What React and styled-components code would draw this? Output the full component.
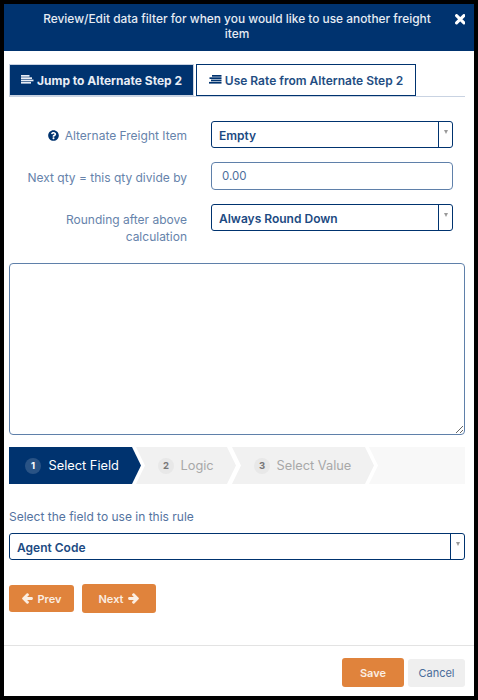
import React from 'react';
import styled, { createGlobalStyle } from 'styled-components';
import { FaArrowLeft, FaArrowRight, FaQuestionCircle } from 'react-icons/fa';

const Global = createGlobalStyle`
  html, body { margin: 0; padding: 0; background: #000; }
  body { font-family: Inter, "Liberation Sans", sans-serif; }
  * { box-sizing: border-box; }
`;
const navy = '#00336f';
const Frame = styled.div`
  width: 478px; height: 700px; padding: 4px; background: #000;
`;
const Modal = styled.div`
  width: 470px; height: 692px; background: #fff; display: flex; flex-direction: column;
`;
const Header = styled.div`
  background: ${navy}; height: 47px; flex: none; display: flex; align-items: flex-start;
  color: #e6ecf4; font-size: 11.9px; font-weight: 500; line-height: 15px;
`;
const HeaderTitle = styled.div`
  flex: 1; text-align: center; margin-left: 30px; padding-top: 7px;
`;
const Close = styled.span`
  width: 34px; flex: none; display: flex; justify-content: center; padding: 10px 0 0 6px; color: #fff;
`;
const Body = styled.div`
  flex: 1; padding: 13px 9px 0 5px; display: flex; flex-direction: column;
`;
const Tabs = styled.div`
  display: flex; border-bottom: 1px solid #c9d3e2; height: 33px; flex: none; width: 456px;
`;
const Tab = styled.div`
  height: 32px;
  width: ${p => (p.$active ? '185px' : '220px')};
  margin-left: ${p => (p.$active ? '0' : '2px')};
  border: 1px solid ${p => (p.$active ? '#c9d3e2' : navy)};
  background: ${p => (p.$active ? navy : '#fff')};
  color: ${p => (p.$active ? '#e8edf5' : '#234d82')};
  font-size: 12px; font-weight: ${p => (p.$active ? 700 : 600)};
  display: flex; align-items: center; justify-content: center; gap: 3px;
`;
const Form = styled.div`
  padding-top: 24px; display: flex; flex-direction: column; flex: none;
`;
const Row = styled.div`
  display: grid; grid-template-columns: 178px 242px; column-gap: 24px;
  margin-bottom: ${p => p.$mb}px; align-items: start;
`;
const Label = styled.div`
  text-align: right; color: #6683ab; font-size: 12px; line-height: 17px; padding-top: ${p => p.$pt || 0}px;
  display: flex; justify-content: flex-end; align-items: center; gap: 6px;
`;
const LabelStack = styled.div`
  text-align: right; color: #6683ab; font-size: 12px; line-height: 17px; padding-top: 7px;
`;
const HelpIcon = styled(FaQuestionCircle)`
  width: 11px; height: 11px; color: ${navy};
`;
const SelectBox = styled.div`
  height: 27px; border: 1px solid ${navy}; border-radius: 3px; display: flex; align-items: center;
  background: #fff; color: #1c4a82; font-size: 12px; font-weight: 600; width: ${p => p.$w || 242}px;
`;
const SelectText = styled.span`
  flex: 1; padding: 1px 0 0 7px;
`;
const SelectCaret = styled.span`
  width: 14px; height: 100%; border-left: 1px solid ${navy}; display: flex; justify-content: center; padding-top: 8px;
`;
const Caret = styled.i`
  width: 0; height: 0; border-left: 2.5px solid transparent; border-right: 2.5px solid transparent; border-top: 4px solid #999;
`;
const Input = styled.div`
  height: 28px; border: 1px solid #5f80aa; border-radius: 4px; display: flex; align-items: center;
  padding: 0 0 0 10px; color: #4e6f9c; font-size: 11.5px;
`;
const TextArea = styled.div`
  height: 172px; width: 456px; border: 1px solid #5f80aa; border-radius: 4px; flex: none; position: relative; margin-top: 18px;
`;
const Grip = styled.svg`
  position: absolute; right: 0; bottom: 0;
`;
const Steps = styled.div`
  margin-top: 12px; height: 37px; width: 456px; background: #fff; display: flex; flex: none; overflow: hidden;
`;
const Step = styled.div`
  height: 37px; width: ${p => p.$w}px; margin-left: ${p => p.$ml}px; flex: none;
  background: ${p => (p.$active ? navy : '#f1f1f1')};
  clip-path: polygon(0 0, calc(100% - 9px) 0, 100% 50%, calc(100% - 9px) 100%, 0 100%, ${p => (p.$first ? '0 50%' : '9px 50%')});
  color: ${p => (p.$active ? '#fff' : '#a8a8a8')}; font-size: 12.8px;
  display: flex; align-items: center; padding-left: ${p => p.$pl}px; gap: ${p => (p.$active ? 7.5 : 6.5)}px;
`;
const StepRest = styled.div`
  height: 37px; flex: 1; margin-left: -5px; background: #f8f8f8;
  clip-path: polygon(0 0, 100% 0, 100% 100%, 0 100%, 9px 50%);
`;
const Num = styled.span`
  width: 16px; height: 16px; border-radius: 50%; flex: none; display: flex; align-items: center; justify-content: center;
  background: ${p => (p.$active ? '#295385' : '#e8e8e8')}; color: ${p => (p.$active ? '#fff' : '#777')};
  font-size: 9.5px; font-weight: 700;
`;
const FieldLabel = styled.div`
  margin-top: 25px; color: #5473a0; font-size: 12px; line-height: 16px; height: 16px;
`;
const FieldSelect = styled(SelectBox)`
  margin-top: 8px;
`;
const Buttons = styled.div`
  display: flex; align-items: center; gap: 8px; margin-top: 24px; flex: none;
`;
const OrangeBtn = styled.div`
  background: #e0833c; color: #fbeee3; border-radius: 3px; font-size: 11px; font-weight: 600;
  display: flex; align-items: center; justify-content: center; gap: 5px;
  width: ${p => p.$w}px; height: ${p => p.$h}px;
  svg { width: 11px; height: 11px; stroke: currentColor; stroke-width: 50; }
`;
const Footer = styled.div`
  height: 51px; flex: none; border-top: 1px solid #e3e3e3; display: flex; justify-content: flex-end;
  align-items: flex-start; padding: 12px 9px 0 0; gap: 4px;
`;
const CancelBtn = styled.div`
  background: #efefef; color: #4a6c9a; border-radius: 3px; font-size: 11px; width: 57px; height: 28px; margin-top: 1px;
  display: flex; align-items: center; justify-content: center;
`;

const Lines = ({ right, color }) => (
  <svg width="13" height="10" viewBox="0 0 13 10" fill={color}>
    {[0, 2.3, 4.6, 6.9].map((y, i) => {
      const w = right ? [9.5, 12, 10.5, 12.5][i] : [8.5, 11, 12.5, 10][i];
      return <rect key={i} x={right ? 12.5 - w : 0} y={y} width={w} height="1.7" />;
    })}
  </svg>
);
const X = () => (
  <svg width="10.5" height="10.5" viewBox="0 0 10 10">
    <path d="M1.5 1.5l7 7M8.5 1.5l-7 7" stroke="#fff" strokeWidth="2.9" strokeLinecap="round" />
  </svg>
);

const Select = ({ children, w, as: C = SelectBox }) => (
  <C $w={w}><SelectText>{children}</SelectText><SelectCaret><Caret /></SelectCaret></C>
);

export default function App() {
  return (
    <Frame>
      <Global />
      <Modal>
        <Header>
          <HeaderTitle>Review/Edit data filter for when you would like to use another freight item</HeaderTitle>
          <Close><X /></Close>
        </Header>
        <Body>
          <Tabs>
            <Tab $active><Lines color="#e8edf5" />Jump to Alternate Step 2</Tab>
            <Tab><Lines right color={navy} />Use Rate from Alternate Step 2</Tab>
          </Tabs>
          <Form>
            <Row $mb={14}>
              <Label $pt={6}><HelpIcon />Alternate Freight Item</Label>
              <Select>Empty</Select>
            </Row>
            <Row $mb={14}>
              <Label $pt={7}>Next qty = this qty divide by</Label>
              <Input>0.00</Input>
            </Row>
            <Row $mb={0}>
              <LabelStack>Rounding after above calculation</LabelStack>
              <Select>Always Round Down</Select>
            </Row>
          </Form>
          <TextArea>
            <Grip width="10" height="10" viewBox="0 0 10 10">
              <path d="M2 9l7-7M6 9l3-3" stroke="#666" strokeWidth="1" />
            </Grip>
          </TextArea>
          <Steps>
            <Step $active $first $w={132} $ml={0} $pl={16}><Num $active>1</Num>Select Field</Step>
            <Step $w={100} $ml={-5} $pl={22}><Num>2</Num>Logic</Step>
            <Step $w={142} $ml={-4} $pl={22}><Num>3</Num>Select Value</Step>
            <StepRest />
          </Steps>
          <FieldLabel>Select the field to use in this rule</FieldLabel>
          <Select w={456} as={FieldSelect}>Agent Code</Select>
          <Buttons>
            <OrangeBtn $w={65} $h={27}><FaArrowLeft />Prev</OrangeBtn>
            <OrangeBtn $w={74} $h={29}>Next<FaArrowRight /></OrangeBtn>
          </Buttons>
        </Body>
        <Footer>
          <OrangeBtn $w={62} $h={29}>Save</OrangeBtn>
          <CancelBtn>Cancel</CancelBtn>
        </Footer>
      </Modal>
    </Frame>
  );
}
